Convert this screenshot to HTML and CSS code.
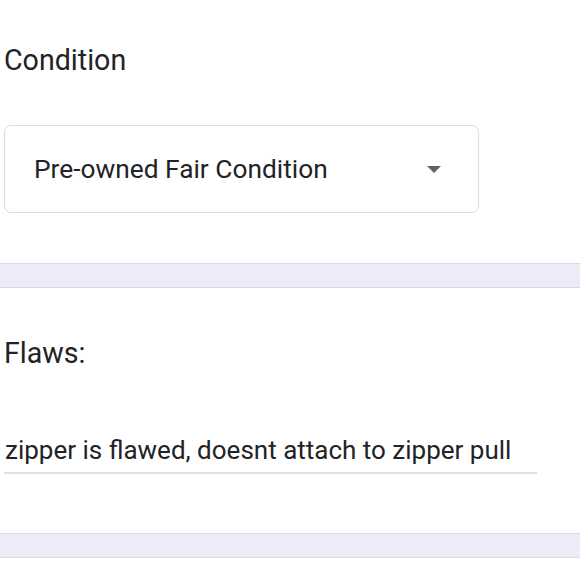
FILE: index.html
```html
<!DOCTYPE html>
<html>
<head>
<meta charset="utf-8">
<link rel="stylesheet" href="styles.css">
</head>
<body>
<section class="card">
  <div class="label">Condition</div>
  <div class="select">
    <span class="select-text">Pre-owned Fair Condition</span>
    <svg class="caret" width="14" height="7" viewBox="0 0 14 7"><path d="M0 0h14L7 7z" fill="#5f6368"/></svg>
  </div>
</section>
<div class="band"></div>
<section class="card card2">
  <div class="label">Flaws:</div>
  <div class="input">zipper is flawed, doesnt attach to zipper pull</div>
</section>
<div class="band"></div>
</body>
</html>
```
FILE: styles.css
```css
html, body { margin: 0; padding: 0; background: #fff; }
body { font-family: Roboto, "Noto Sans", sans-serif; color: #222326; width: 580px; height: 580px; overflow: hidden; }
.card { padding: 44px 0 50px 0; }
.label { font-size: 28.6px; line-height: 32px; padding-left: 4px; }
.select { margin: 49px 0 0 4px; width: 475px; height: 88px; border: 1px solid #dadce0; border-radius: 7px; display: flex; align-items: center; justify-content: space-between; padding: 0 37px 0 29px; box-sizing: border-box; }
.select-text { font-size: 26.3px; }
.band { background: #eeeaf8; border-top: 1px solid #dcd9e3; border-bottom: 1px solid #dcd9e3; box-sizing: border-box; height: 25px; }
.card2 { padding: 49px 0 59px 0; }
.input { margin: 65px 0 0 4px; width: 533px; font-size: 26px; line-height: 32px; padding: 0 0 6px 1px; border-bottom: 2px solid #e0e0e0; box-sizing: border-box; }
```
